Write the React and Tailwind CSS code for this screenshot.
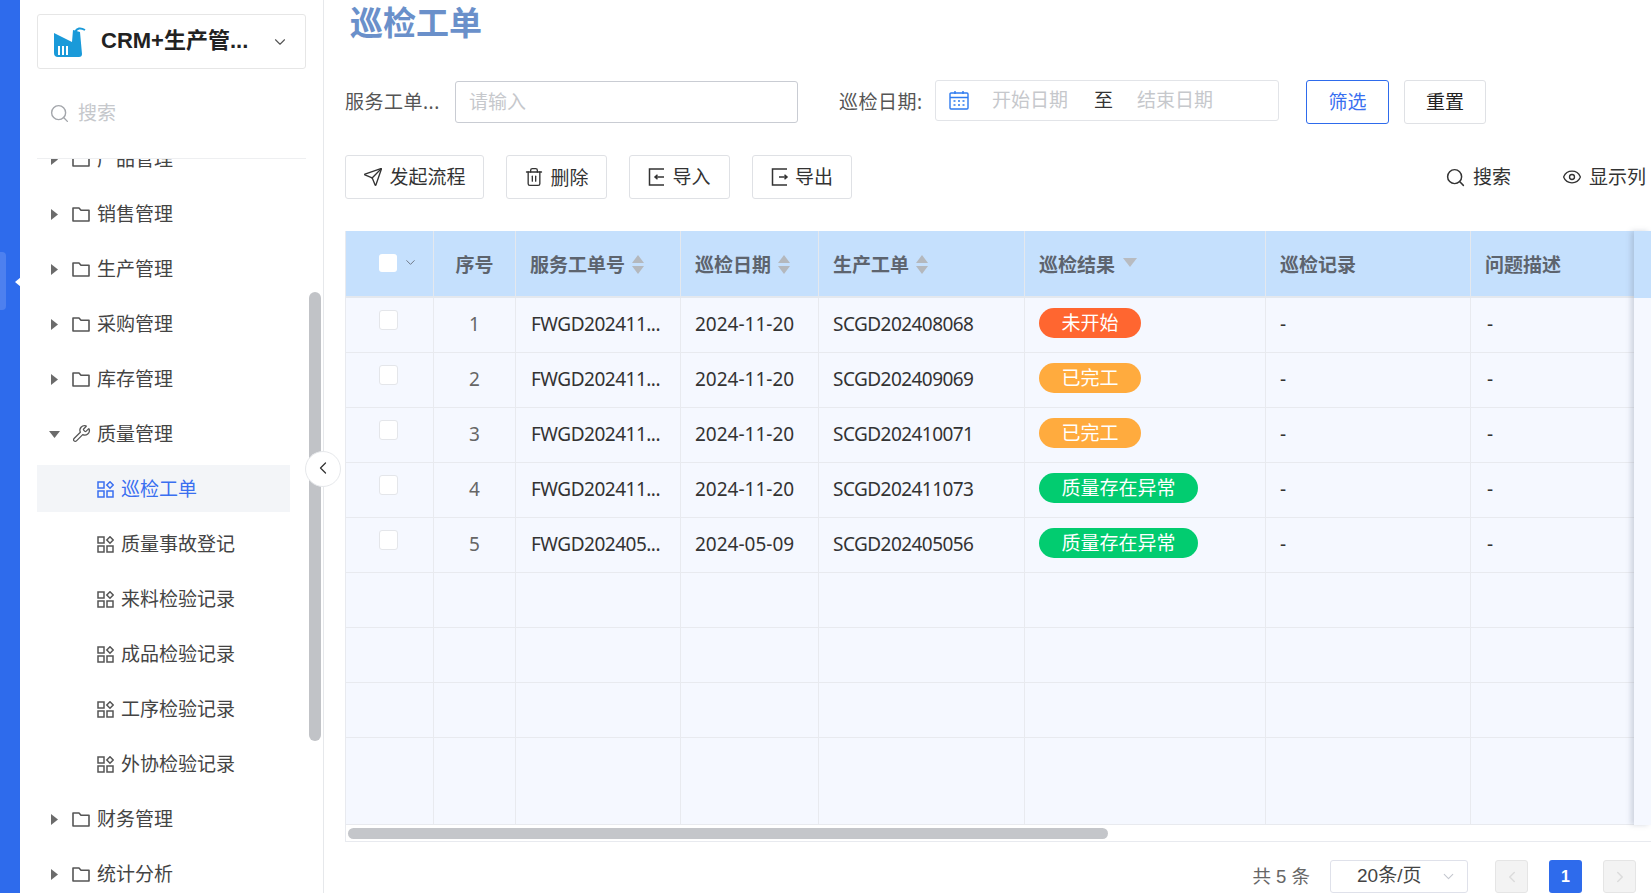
import { Search, ChevronDown, ChevronLeft, ChevronRight, Wrench, Send, Trash2, Eye } from 'lucide-react';

const FONT = "font-['Noto_Sans','Noto_Sans_CJK_SC',sans-serif]";
const ARIAL = "font-['Liberation_Sans','Noto_Sans_CJK_SC',sans-serif]";

const Logo = () => (
  <svg width="32" height="32" viewBox="0 0 32 32" className="shrink-0">
    <path d="M0 7 L18 16 L19 4 L26 6 L28 28 Q28 31 25 31 L4 31 Q0 31 0 27 Z" fill="#1a9ad9" />
    <path d="M4 20h2v9H4zM8 20h2v9H8zM12 20h2v9h-2z" fill="#fff" />
    <path d="M21 6 Q24 0 31 4" fill="none" stroke="#1a9ad9" strokeWidth="2" />
  </svg>
);

const CaretRight = () => (
  <svg width="7" height="11" viewBox="0 0 7 11"><path d="M0 0 L7 5.5 L0 11 Z" fill="#6b6b6b" /></svg>
);

const CaretDown = () => (
  <svg width="11" height="7" viewBox="0 0 11 7" className="-ml-[2px]"><path d="M0 0 L11 0 L5.5 7 Z" fill="#6b6b6b" /></svg>
);

const FolderIcon = () => (
  <svg width="18" height="15" viewBox="0 0 18 15" fill="none" stroke="#555" strokeWidth="1.6">
    <path d="M1 1 H7 L9 3.2 H17 V14 H1 Z" strokeLinejoin="round" />
  </svg>
);

const Cells = () => (
  <svg width="17" height="17" viewBox="0 0 17 17" fill="none" stroke="currentColor" strokeWidth="1.5">
    <rect x="1" y="1" width="6" height="6" />
    <rect x="1" y="10" width="6" height="6" />
    <rect x="10" y="10" width="6" height="6" />
    <path d="M13 .8 L16.2 4 L13 7.2 L9.8 4 Z" />
  </svg>
);

const SortIcon = () => (
  <svg width="12" height="19" viewBox="0 0 12 19" className="ml-[7px] -mt-[2px]">
    <path d="M6 0 L12 8 L0 8 Z M6 19 L12 11 L0 11 Z" fill="#b4b8bd" />
  </svg>
);

const ImportIcon = ({ out }) => (
  <svg width="18" height="18" viewBox="0 0 18 18" fill="none" stroke="#333" strokeWidth="1.5">
    <path d="M16 1H1.5V17H16" />
    {out ? <path d="M8 9H16M13.5 6.8 L16 9 L13.5 11.2" /> : <path d="M16 9H7M9.5 6.8 L7 9 L9.5 11.2" />}
  </svg>
);

const CalendarIcon = () => (
  <svg width="20" height="20" viewBox="0 0 20 20" fill="none" stroke="#2e7bf0" strokeWidth="1.4">
    <rect x="1" y="3" width="18" height="16" rx="1" />
    <path d="M1 7.5H19M6 1V4M14 1V4" />
    <path d="M4.5 11H6.5M9 11H11M13.5 11H15.5M4.5 15H6.5M9 15H11M13.5 15H15.5" />
  </svg>
);

const topMenus = ['销售管理', '生产管理', '采购管理', '库存管理'];
const subMenus = ['质量事故登记', '来料检验记录', '成品检验记录', '工序检验记录', '外协检验记录'];

const rows = [
  { no: 1, code: 'FWGD202411...', date: '2024-11-20', sc: 'SCGD202408068', tag: '未开始', color: 'bg-[#ff6630]', w: 'w-[102px]' },
  { no: 2, code: 'FWGD202411...', date: '2024-11-20', sc: 'SCGD202409069', tag: '已完工', color: 'bg-[#ffab3e]', w: 'w-[102px]' },
  { no: 3, code: 'FWGD202411...', date: '2024-11-20', sc: 'SCGD202410071', tag: '已完工', color: 'bg-[#ffab3e]', w: 'w-[102px]' },
  { no: 4, code: 'FWGD202411...', date: '2024-11-20', sc: 'SCGD202411073', tag: '质量存在异常', color: 'bg-[#02cc70]', w: 'w-[159px]' },
  { no: 5, code: 'FWGD202405...', date: '2024-05-09', sc: 'SCGD202405056', tag: '质量存在异常', color: 'bg-[#02cc70]', w: 'w-[159px]' },
];

function MenuRow({ label, icon, caret }) {
  return (
    <div className="flex h-[55px] items-center text-[19px] text-[#444]">
      <span className="ml-[14px] flex w-[21px] items-center">{caret || <CaretRight />}</span>
      <span className="flex w-[25px] items-center text-[#555]">{icon || <FolderIcon />}</span>
      <span>{label}</span>
    </div>
  );
}

function SubRow({ label, active }) {
  return (
    <div className="h-[55px] pt-[3px]">
      <div className={`flex h-[47px] w-[253px] items-center pl-[60px] pt-[2px] text-[19px] ${active ? 'bg-[#f3f5f8] text-[#3a6ff0]' : 'text-[#444]'}`}>
        <span className={`mr-[7px] flex ${active ? 'text-[#3a6ff0]' : 'text-[#555]'}`}><Cells /></span>
        {label}
      </div>
    </div>
  );
}

function Sidebar() {
  return (
    <aside className="relative flex w-[304px] shrink-0 flex-col border-r border-[#e6e8eb] bg-white pl-[17px]">
      <div className="mt-[14px] flex h-[55px] w-[269px] items-center rounded-[3px] border border-[#e6e6e6] pl-[16px] pr-[16px]">
        <Logo />
        <span className={`-mt-[2px] ml-[15px] whitespace-nowrap text-[22px] font-bold text-[#222] ${ARIAL}`}>CRM+生产管...</span>
        <ChevronDown size={18} strokeWidth={1.5} className="ml-auto text-[#555]" />
      </div>
      <div className="flex h-[90px] w-[269px] shrink-0 items-center border-b border-[#eeeff1] pl-[12px] pb-[1px]">
        <Search size={21} strokeWidth={1.6} className="text-[#a3a6ab]" />
        <span className="ml-[8px] text-[19px] text-[#c6c8cc]">搜索</span>
      </div>
      <div className="min-h-0 flex-1 overflow-hidden">
        <div className="-mt-[27px]">
          <MenuRow label="产品管理" />
          {topMenus.map((m) => <MenuRow key={m} label={m} />)}
          <MenuRow label="质量管理" caret={<CaretDown />} icon={<Wrench size={19} strokeWidth={1.6} className="-mt-[3px]" />} />
          <SubRow label="巡检工单" active />
          {subMenus.map((m) => <SubRow key={m} label={m} />)}
          <MenuRow label="财务管理" />
          <MenuRow label="统计分析" />
        </div>
      </div>
      <div className="absolute left-[289px] top-[292px] h-[449px] w-[12px] rounded-full bg-[#c1c3c7]" />
      <div className="absolute left-[285px] top-[451px] z-10 flex h-[36px] w-[36px] items-center justify-center rounded-full border border-[#e6e8eb] bg-white">
        <ChevronLeft size={20} strokeWidth={1.5} className="-ml-[1px] -mt-[2px] text-[#333]" />
      </div>
    </aside>
  );
}

function Btn({ icon, label, className = '', border = 'border-[#dfe1e5]', text = 'text-[#333]', textClass = '' }) {
  return (
    <button className={`flex h-[44px] items-center justify-center gap-[6px] rounded-[3px] border bg-white text-[19px] ${border} ${text} ${className}`}>
      {icon}
      <span className={textClass}>{label}</span>
    </button>
  );
}

function Th({ label, sort, center, filter }) {
  return (
    <th className={`border-r border-b-2 border-[#e4e8ee] px-0 text-[19px] font-bold text-[#5d646e] ${center ? 'text-center' : 'text-left'}`}>
      <div className={`flex items-center pt-[3px] ${center ? 'justify-center' : 'pl-[14px]'}`}>
        {label}
        {sort && <SortIcon />}
        {filter && (
          <svg width="14" height="9" viewBox="0 0 14 9" className="ml-[8px] -mt-[6px]"><path d="M0 0H14L7 9Z" fill="#b8bbc0" /></svg>
        )}
      </div>
    </th>
  );
}

function DataTable() {
  const td = 'border-r border-b border-[#e8eaef] pb-[2px] text-[19px] text-[#333]';
  return (
    <div className="relative ml-[1px] border-l border-b border-[#e8eaef]">
      <div className="overflow-hidden">
        <table className="w-[1306px] table-fixed border-separate border-spacing-0">
          <colgroup>
            <col className="w-[88px]" />
            <col className="w-[82px]" />
            <col className="w-[165px]" />
            <col className="w-[138px]" />
            <col className="w-[206px]" />
            <col className="w-[241px]" />
            <col className="w-[205px]" />
            <col className="w-[181px]" />
          </colgroup>
          <thead>
            <tr className="h-[67px] bg-[#c5e0fd]">
              <th className="border-r border-b-2 border-[#e4e8ee]">
                <div className="-mt-[2px] flex items-center pl-[33px]">
                  <span className="h-[18px] w-[18px] rounded-[3px] bg-white" />
                  <ChevronDown size={15} strokeWidth={1.5} className="ml-[6px] text-[#6b7280]" />
                </div>
              </th>
              <Th label="序号" center />
              <Th label="服务工单号" sort />
              <Th label="巡检日期" sort />
              <Th label="生产工单" sort />
              <Th label="巡检结果" filter />
              <Th label="巡检记录" />
              <Th label="问题描述" />
            </tr>
          </thead>
          <tbody className="bg-[#f5f8ff]">
            {rows.map((r) => (
              <tr key={r.no} className="h-[55px]">
                <td className={td}>
                  <div className="-mt-[8px] flex pl-[33px]">
                    <span className="h-[20px] w-[19px] rounded-[3px] border border-[#e4e6ea] bg-white" />
                  </div>
                </td>
                <td className={`${td} text-center text-[#666]`}>{r.no}</td>
                <td className={`${td} pl-[15px] tracking-[-0.5px]`}>{r.code}</td>
                <td className={`${td} pl-[14px]`}>{r.date}</td>
                <td className={`${td} pl-[14px] tracking-[-0.55px]`}>{r.sc}</td>
                <td className={`${td} pl-[14px]`}>
                  <span className={`-mt-[2px] flex h-[30px] items-center justify-center rounded-full text-white ${r.color} ${r.w}`}>{r.tag}</span>
                </td>
                <td className={`${td} pl-[14px]`}>-</td>
                <td className={`${td} pl-[16px]`}>-</td>
              </tr>
            ))}
            {[55, 55, 55, 87].map((h, i) => (
              <tr key={i} className={h === 55 ? 'h-[55px]' : 'h-[87px]'}>
                {[0, 1, 2, 3, 4, 5, 6, 7].map((c) => <td key={c} className={td} />)}
              </tr>
            ))}
          </tbody>
        </table>
      </div>
      <div className="flex h-[16px] items-center pl-[2px]">
        <div className="h-[11px] w-[760px] rounded-full bg-[#c4c6ca]" />
      </div>
      <div className="absolute right-0 top-0 h-[594px] w-[17px] bg-[#f5f8ff] shadow-[-3px_0_5px_rgba(120,130,150,0.3)]">
        <div className="h-[67px] bg-[#c5e0fd]" />
      </div>
    </div>
  );
}

export default function App() {
  return (
    <div className={`flex h-[893px] w-[1651px] overflow-hidden bg-white ${FONT}`}>
      <div className="relative w-[20px] shrink-0 bg-[#2e6bec]">
        <div className="absolute left-0 top-[252px] h-[58px] w-[6px] rounded-r-[4px] bg-[#4d80ef]" />
        <div className="absolute left-[15px] top-[277px] h-0 w-0 border-y-[5px] border-r-[6px] border-y-transparent border-r-white" />
      </div>
      <Sidebar />
      <main className="min-w-0 flex-1 pl-[20px]">
        <h1 className="ml-[6px] mt-[1px] h-[46px] text-[33px] font-bold leading-[44px] text-[#6a90ca]">巡检工单</h1>
        <div className="mt-[33px] flex h-[44px] items-center text-[19px]">
          <span className="ml-[1px] w-[110px] tracking-[0.5px] text-[#555]">服务工单...</span>
          <input placeholder="请输入" className="h-[42px] w-[343px] rounded-[3px] border border-[#c9ccd3] px-[13px] text-[19px] outline-none placeholder:text-[#c6c8cc]" />
          <span className="ml-[41px] w-[96px] tracking-[0.5px] text-[#555]">巡检日期:</span>
          <div className="-mt-[4px] flex h-[41px] w-[344px] items-center rounded-[3px] border border-[#e2e4e8] pl-[13px]">
            <CalendarIcon />
            <span className="ml-[23px] w-[102px] text-[#c6c8cc]">开始日期</span>
            <span className="w-[43px] text-[#333]">至</span>
            <span className="text-[#c6c8cc]">结束日期</span>
          </div>
          <Btn label="筛选" border="border-[#2e6bec]" text="text-[#3a6ff0]" className="ml-[27px] w-[83px]" />
          <Btn label="重置" text="text-[#222]" className="ml-[15px] w-[82px]" />
        </div>
        <div className="mt-[31px] flex h-[44px] items-center pl-[1px]">
          <Btn icon={<Send size={20} strokeWidth={1.6} />} label="发起流程" className="w-[139px]" />
          <Btn icon={<Trash2 size={20} strokeWidth={1.6} />} label="删除" textClass="mt-[3px]" className="ml-[22px] w-[101px]" />
          <Btn icon={<ImportIcon />} label="导入" className="ml-[22px] w-[101px]" />
          <Btn icon={<ImportIcon out />} label="导出" className="ml-[22px] w-[100px]" />
          <div className="ml-[593px] flex items-center gap-[7px] text-[19px] text-[#333]">
            <Search size={21} strokeWidth={1.7} />
            搜索
          </div>
          <div className="ml-[51px] flex items-center gap-[7px] whitespace-nowrap text-[19px] text-[#333]">
            <Eye size={20} strokeWidth={1.6} />
            显示列
          </div>
        </div>
        <div className="mt-[32px]">
          <DataTable />
        </div>
        <div className={`mt-[18px] flex items-center justify-end pr-[15px] text-[19px] ${ARIAL}`}>
          <span className="text-[18.5px] text-[#666]">共 5 条</span>
          <div className="ml-[20px] flex h-[33px] w-[138px] items-center rounded-[3px] border border-[#dfe1ea] pl-[26px] pr-[10px] text-[#444]">
            20条/页
            <ChevronDown size={17} strokeWidth={1.5} className="ml-auto text-[#c4c7cf]" />
          </div>
          <div className="ml-[27px] flex h-[33px] w-[33px] items-center justify-center rounded-[3px] border border-[#e5e5e5] bg-[#f3f3f3] text-[#dcdcdc]">
            <ChevronLeft size={18} />
          </div>
          <div className="ml-[21px] flex h-[33px] w-[33px] items-center justify-center rounded-[3px] bg-[#2e6bec] text-[16px] font-bold text-white">1</div>
          <div className="ml-[21px] flex h-[33px] w-[33px] items-center justify-center rounded-[3px] border border-[#e5e5e5] bg-[#f3f3f3] text-[#dcdcdc]">
            <ChevronRight size={18} />
          </div>
        </div>
      </main>
    </div>
  );
}
